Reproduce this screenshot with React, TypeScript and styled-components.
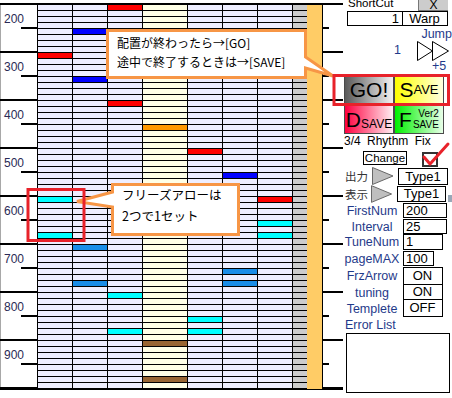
import React from "react";
import styled, { createGlobalStyle } from "styled-components";

const Global = createGlobalStyle`
  html, body { margin: 0; padding: 0; background: #fff; }
  body { font-family: "Liberation Sans", Arial, sans-serif; }
`;

const LAV = "#eeeeff";
const YEL = "#ffffe6";
const GRAY = "#cccccc";
const RED = "#ff0000";
const CYAN = "#00ffff";
const BLUE = "#0000ff";
const DODGER = "#1a8ee8";
const ORANGE = "#ff9900";
const BROWN = "#996633";
const NAVY = "#1f3a8a";

const Page = styled.div`
  position: relative;
  width: 452px;
  height: 398px;
  overflow: hidden;
  display: flex;
  align-items: flex-start;
  background: #fff;
`;

const Chart = styled.div`
  flex: none;
  width: 343px;
  margin-top: 3px;
  border-top: 2px solid #000;
  border-bottom: 1px solid #000;
  display: flex;
`;

const Axis = styled.div`
  flex: none;
  width: 37px;
  display: flex;
  flex-direction: column;
  box-shadow: inset 1px 0 0 #a8a8a8;
`;

const Seg = styled.div`
  height: 48px;
  box-sizing: border-box;
  border-bottom: 2px solid #000;
  display: flex;
  flex-direction: column;
`;

const AxisLabel = styled.div`
  padding: 7px 0 0 4px;
  height: 14px;
  line-height: 14px;
  font-size: 12px;
  color: #2a2a55;
`;

const Tick = styled.div<{ $w: number; $right?: boolean }>`
  width: ${(p) => p.$w}px;
  height: 2px;
  background: #000;
  margin-top: ${(p) => (p.$right ? 22 : 1)}px;
  align-self: ${(p) => (p.$right ? "flex-start" : "flex-end")};
`;

const Lane = styled.div<{ $w: number; $bg: string }>`
  position: relative;
  flex: none;
  box-sizing: border-box;
  width: ${(p) => p.$w}px;
  height: 384px;
  border-left: 1px solid #000;
  background: repeating-linear-gradient(
    to bottom,
    ${(p) => p.$bg} 0 5px,
    #000 5px 6px
  );
`;

const OrangeLane = styled.div`
  flex: none;
  box-sizing: border-box;
  width: 16px;
  height: 384px;
  background: #ffcc66;
  border-right: 1px solid #000;
`;

const TickCol = styled.div`
  flex: none;
  width: 20px;
  display: flex;
  flex-direction: column;
`;

const Note = styled.div<{ $c: string }>`
  position: absolute;
  left: 0;
  right: 0;
  height: 5px;
  background: ${(p) => p.$c};
`;

const Panel = styled.div`
  flex: none;
  width: 109px;
  display: flex;
  flex-direction: column;
  font-size: 12.5px;
  color: #000;
`;

const TopRow = styled.div`
  height: 11px;
  display: flex;
  justify-content: space-between;
  align-items: flex-start;
`;

const ShortCut = styled.div`
  margin: -3px 0 0 5px;
  font-size: 11.5px;
  line-height: 12px;
`;

const CloseBtn = styled.div`
  width: 30px;
  height: 11px;
  margin-right: 4px;
  box-sizing: border-box;
  background: #cccccc;
  border-left: 1px solid #777;
  border-bottom: 1px solid #777;
  font-size: 12px;
  line-height: 11px;
  text-align: center;
  overflow: hidden;
`;

const WarpRow = styled.div`
  display: flex;
  padding-left: 4px;
`;

const Field = styled.div<{ $w: number; $h: number; $align?: string; $noTop?: boolean; $noLeft?: boolean }>`
  width: ${(p) => p.$w}px;
  height: ${(p) => p.$h}px;
  box-sizing: border-box;
  border: 1px solid #000;
  ${(p) => (p.$noTop ? "border-top: none;" : "")}
  ${(p) => (p.$noLeft ? "border-left: none;" : "")}
  text-align: ${(p) => p.$align || "left"};
  padding: 0 3px 0 2px;
  line-height: ${(p) => p.$h - 2}px;
  font-size: 13px;
  background: #fff;
`;

const JumpText = styled.div`
  margin-top: 2px;
  height: 13px;
  line-height: 13px;
  text-align: right;
  color: ${NAVY};
`;

const ArrowRow = styled.div`
  height: 19px;
  display: flex;
  align-items: center;
`;

const Num = styled.div`
  width: 23px;
  padding-left: 51px;
  color: ${NAVY};
  line-height: 19px;
`;

const PlusRow = styled.div`
  height: 12px;
  line-height: 12px;
  padding-left: 89px;
  color: ${NAVY};
`;

const ButtonGrid = styled.div`
  margin: 2px 0 0 1px;
  display: grid;
  grid-template-columns: 50px 50px;
  grid-template-rows: 30px 30px;
`;

const ActionBtn = styled.div<{ $from: string; $to: string; $down?: boolean }>`
  box-sizing: border-box;
  border: 1px solid #4a4a4a;
  background: linear-gradient(to right, ${(p) => p.$from}, ${(p) => p.$to});
  display: flex;
  justify-content: center;
  align-items: ${(p) => (p.$down ? "flex-end" : "center")};
  padding-bottom: ${(p) => (p.$down ? 3 : 0)}px;
  color: #000;
  line-height: 1;
`;

const Big = styled.span`
  font-size: 21px;
`;

const Small = styled.span<{ $s: number }>`
  font-size: ${(p) => p.$s}px;
`;

const Stack = styled.span`
  display: flex;
  flex-direction: column;
  align-items: flex-end;
  font-size: 10px;
  line-height: 11px;
  margin-left: 1px;
`;

const Rhythm = styled.div`
  height: 13px;
  line-height: 14px;
  padding-left: 1px;
  font-size: 12px;
  word-spacing: 3px;
`;

const ChangeRow = styled.div`
  height: 20px;
  display: flex;
  align-items: flex-start;
`;

const ChangeBtn = styled.div`
  margin: 4px 0 0 20px;
  width: 44px;
  height: 14px;
  box-sizing: border-box;
  border: 1px solid #000;
  font-size: 11.5px;
  line-height: 12px;
  text-align: center;
`;

const CheckBox = styled.div`
  position: relative;
  margin: 5px 0 0 15px;
  width: 16px;
  height: 15px;
  box-sizing: border-box;
  border: 2px solid #333;
  background: #fff;
`;

const CheckMark = styled.svg`
  position: absolute;
  left: -2px;
  top: -11px;
  overflow: visible;
`;

const TypeRow = styled.div<{ $h: number }>`
  height: ${(p) => p.$h}px;
  display: flex;
  align-items: center;
`;

const JpLabel = styled.div`
  width: 27px;
  padding-left: 2px;
  font-family: "Noto Sans CJK JP", sans-serif;
  font-size: 11.5px;
  color: #333;
  line-height: 16px;
`;

const TypeBox = styled.div<{ $h: number }>`
  margin-left: 4px;
  width: 50px;
  height: ${(p) => p.$h}px;
  box-sizing: border-box;
  border: 1px solid #000;
  text-align: center;
  line-height: ${(p) => p.$h - 2}px;
  font-size: 13px;
`;

const Nub = styled.div`
  margin-left: 2px;
  margin-top: 10px;
  width: 4px;
  height: 7px;
  background: #9aa8b8;
`;

const FieldRow = styled.div<{ $mt: number }>`
  margin-top: ${(p) => p.$mt}px;
  display: flex;
  align-items: center;
`;

const FieldLabel = styled.div`
  width: 58px;
  margin-right: 2px;
  text-align: center;
  color: ${NAVY};
  font-size: 12.5px;
  white-space: nowrap;
`;

const ErrLabel = styled.div`
  margin-top: 1px;
  height: 15px;
  line-height: 15px;
  padding-left: 2px;
  color: ${NAVY};
`;

const ErrBox = styled.div`
  margin-left: 3px;
  width: 104px;
  height: 60px;
  box-sizing: border-box;
  border: 1px solid #000;
  background: #fff;
`;

const Overlay = styled.svg`
  position: absolute;
  left: 0;
  top: 0;
  pointer-events: none;
`;

const CalloutText = styled.div<{ $fs: number; $lh: number }>`
  position: absolute;
  font-family: "Noto Sans CJK JP", sans-serif;
  font-size: ${(p) => p.$fs}px;
  line-height: ${(p) => p.$lh}px;
  color: #000;
  white-space: nowrap;
`;

type NoteT = [number, string];
const lanes: { w: number; bg: string; notes: NoteT[] }[] = [
  { w: 35, bg: LAV, notes: [[8, RED], [32, CYAN], [38, CYAN]] },
  { w: 35, bg: LAV, notes: [[4, BLUE], [12, BLUE], [40, DODGER], [46, DODGER]] },
  { w: 35, bg: LAV, notes: [[0, RED], [16, RED], [48, CYAN], [54, CYAN]] },
  { w: 45, bg: YEL, notes: [[20, ORANGE], [56, BROWN], [62, BROWN]] },
  { w: 35, bg: LAV, notes: [[24, RED], [52, CYAN], [54, CYAN]] },
  { w: 35, bg: LAV, notes: [[28, BLUE], [44, DODGER], [46, DODGER]] },
  { w: 35, bg: LAV, notes: [[32, RED], [36, CYAN], [38, CYAN]] },
  { w: 15, bg: GRAY, notes: [] },
];

const labels = ["200", "300", "400", "500", "600", "700", "800", "900"];

const Triangle = () => (
  <svg width="22" height="18" viewBox="0 0 22 18">
    <polygon points="0.5,0.5 0.5,17.5 21,9" fill="#bfbfbf" stroke="#666" strokeWidth="1" />
  </svg>
);

export default function App() {
  return (
    <>
      <Global />
      <Page>
        <Chart>
          <Axis>
            {labels.map((l) => (
              <Seg key={l}>
                <AxisLabel>{l}</AxisLabel>
                <Tick $w={16} />
              </Seg>
            ))}
          </Axis>
          {lanes.map((lane, i) => (
            <Lane key={i} $w={lane.w} $bg={lane.bg}>
              {lane.notes.map(([row, c], j) => (
                <Note key={j} $c={c} style={{ top: row * 6 }} />
              ))}
            </Lane>
          ))}
          <OrangeLane />
          <TickCol>
            {labels.map((l) => (
              <Seg key={l}>
                <Tick $w={6} $right />
              </Seg>
            ))}
          </TickCol>
        </Chart>

        <Panel>
          <TopRow>
            <ShortCut>ShortCut</ShortCut>
            <CloseBtn>X</CloseBtn>
          </TopRow>
          <WarpRow>
            <Field $w={56} $h={15} $align="right">1</Field>
            <Field $w={45} $h={15} $align="center" $noLeft>
              Warp
            </Field>
          </WarpRow>
          <JumpText>Jump</JumpText>
          <ArrowRow>
            <Num>1</Num>
            <svg width="33" height="20" viewBox="0 0 33 20">
              <polygon points="0.5,0.5 0.5,19.5 15.5,10" fill="#fff" stroke="#000" strokeWidth="1" />
              <polygon points="15.5,0.5 15.5,19.5 31.5,10" fill="#fff" stroke="#000" strokeWidth="1" />
            </svg>
          </ArrowRow>
          <PlusRow>+5</PlusRow>
          <ButtonGrid>
            <ActionBtn $from="#5a5a5a" $to="#f2f2f2">
              <Big>GO!</Big>
            </ActionBtn>
            <ActionBtn $from="#ffff00" $to="#ffffe0">
              <Big>S</Big>
              <Small $s={13}>AVE</Small>
            </ActionBtn>
            <ActionBtn $from="#ff0040" $to="#ffeef2" $down>
              <Big>D</Big>
              <Small $s={12}>SAVE</Small>
            </ActionBtn>
            <ActionBtn $from="#00f000" $to="#e8ffe8" $down>
              <Big>F</Big>
              <Stack>
                <span>Ver2</span>
                <span>SAVE</span>
              </Stack>
            </ActionBtn>
          </ButtonGrid>
          <Rhythm>3/4 Rhythm Fix</Rhythm>
          <ChangeRow>
            <ChangeBtn>Change</ChangeBtn>
            <CheckBox>
              <CheckMark width="30" height="24" viewBox="0 0 30 24">
                <polyline
                  points="2,14 8,21 26,1"
                  fill="none"
                  stroke="#e8222a"
                  strokeWidth="3"
                  strokeLinecap="round"
                  strokeLinejoin="round"
                />
              </CheckMark>
            </CheckBox>
          </ChangeRow>
          <TypeRow $h={18}>
            <JpLabel>出力</JpLabel>
            <Triangle />
            <TypeBox $h={17}>Type1</TypeBox>
          </TypeRow>
          <TypeRow $h={17}>
            <JpLabel>表示</JpLabel>
            <Triangle />
            <TypeBox $h={16}>Type1</TypeBox>
            <Nub />
          </TypeRow>
          <FieldRow $mt={1}>
            <FieldLabel>FirstNum</FieldLabel>
            <Field $w={44} $h={15}>200</Field>
          </FieldRow>
          <FieldRow $mt={1}>
            <FieldLabel>Interval</FieldLabel>
            <Field $w={44} $h={15}>25</Field>
          </FieldRow>
          <FieldRow $mt={0}>
            <FieldLabel>TuneNum</FieldLabel>
            <Field $w={40} $h={16}>1</Field>
          </FieldRow>
          <FieldRow $mt={1}>
            <FieldLabel>pageMAX</FieldLabel>
            <Field $w={31} $h={15}>100</Field>
          </FieldRow>
          <FieldRow $mt={1}>
            <FieldLabel>FrzArrow</FieldLabel>
            <Field $w={40} $h={18} $align="center">ON</Field>
          </FieldRow>
          <FieldRow $mt={0}>
            <FieldLabel>tuning</FieldLabel>
            <Field $w={40} $h={15} $align="center" $noTop>ON</Field>
          </FieldRow>
          <FieldRow $mt={0}>
            <FieldLabel>Templete</FieldLabel>
            <Field $w={40} $h={17} $align="center" $noTop>OFF</Field>
          </FieldRow>
          <ErrLabel>Error List</ErrLabel>
          <ErrBox />
        </Panel>

        <Overlay width="452" height="398" viewBox="0 0 452 398">
          <path
            d="M107.5,30.5 H305.5 V57 L333,76 L305.5,68 V77.5 H107.5 Z"
            fill="#fff"
            stroke="#f79646"
            strokeWidth="3"
            strokeLinejoin="miter"
          />
          <path
            d="M112.5,184.5 H238.5 V234.5 H112.5 V207 L77,201.5 L112.5,192 Z"
            fill="#fff"
            stroke="#f79646"
            strokeWidth="3"
          />
          <rect x="334" y="75.5" width="114.5" height="29" fill="none" stroke="#e8222a" strokeWidth="3" />
          <rect x="28" y="189.5" width="56" height="51" fill="none" stroke="#e8222a" strokeWidth="3" />
        </Overlay>
        <CalloutText $fs={12} $lh={19} style={{ left: 117, top: 33 }}>
          <div>配置が終わったら→[GO]</div>
          <div>途中で終了するときは→[SAVE]</div>
        </CalloutText>
        <CalloutText $fs={12.5} $lh={21} style={{ left: 122, top: 184 }}>
          <div>フリーズアローは</div>
          <div>2つで1セット</div>
        </CalloutText>
      </Page>
    </>
  );
}
